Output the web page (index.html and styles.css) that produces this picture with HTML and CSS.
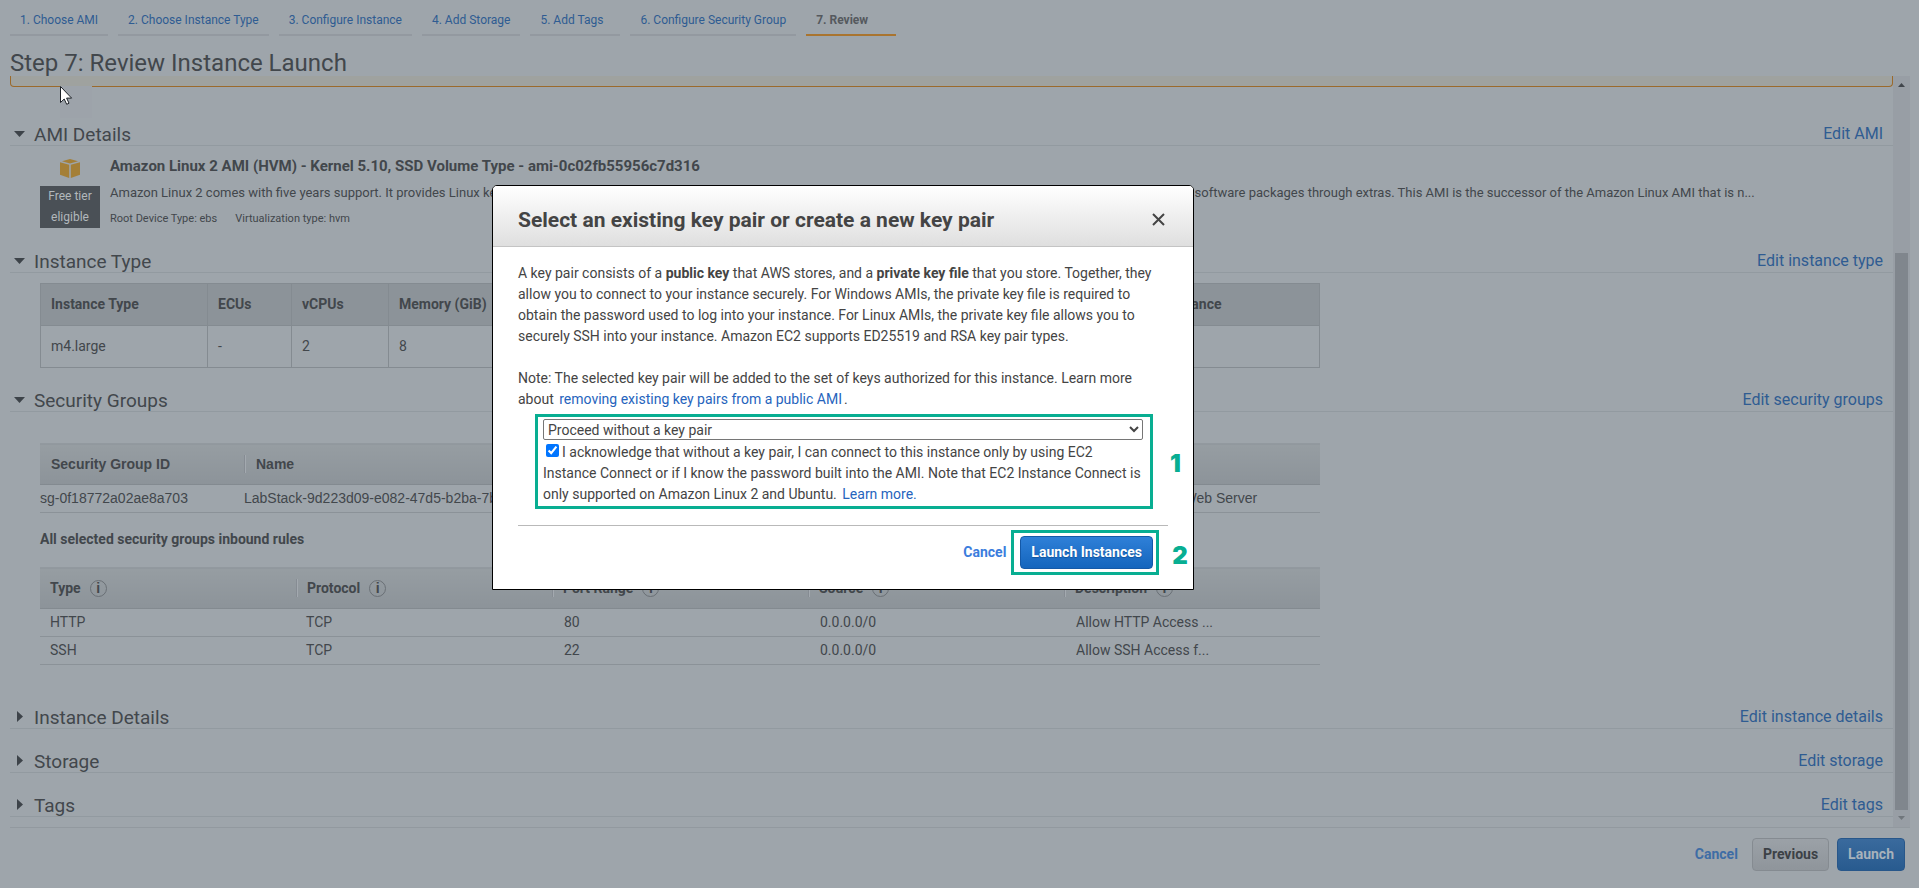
FILE: index.html
```html
<!DOCTYPE html>
<html lang="en">
<head>
<meta charset="utf-8">
<title>Step 7: Review Instance Launch</title>
<link rel="stylesheet" href="styles.css">
</head>
<body>
<div class="page">
  <nav class="steps">
    <a href="#">1. Choose AMI</a>
    <a href="#">2. Choose Instance Type</a>
    <a href="#">3. Configure Instance</a>
    <a href="#">4. Add Storage</a>
    <a href="#">5. Add Tags</a>
    <a href="#">6. Configure Security Group</a>
    <a href="#" class="current">7. Review</a>
  </nav>
  <h1 class="title">Step 7: Review Instance Launch</h1>

  <div class="scroller">
    <main class="content">
      <div class="notice"></div>

      <header class="section-head first">
        <svg class="caret" viewBox="0 0 11 11"><path d="M0 3h11L5.500 9z"/></svg>
        <h2>AMI Details</h2><a href="#">Edit AMI</a>
      </header>
      <section class="ami">
        <div class="badge-col">
          <svg class="cube" viewBox="0 0 20 19"><path d="M10 0l8 2.200-8 2.300-8-2.300z"/><path d="M0 3.200l9.200 2.600V19L0 15.800z"/><path d="M20 3.200l-9.200 2.600V19l9.200-3.200z"/></svg>
          <span class="badge">Free tier eligible</span>
        </div>
        <div class="ami-text">
          <h3>Amazon Linux 2 AMI (HVM) - Kernel 5.10, SSD Volume Type - ami-0c02fb55956c7d316</h3>
          <p class="desc">Amazon Linux 2 comes with five years support. It provides Linux kernel 5.10 tuned for optimal performance on Amazon EC2, systemd 219, GCC 7.3, Glibc 2.26, Binutils 2.29.1, and the latest software packages through extras. This AMI is the successor of the Amazon Linux AMI that is n...</p>
          <p class="meta"><span>Root Device Type: ebs</span><span>Virtualization type: hvm</span></p>
        </div>
      </section>

      <header class="section-head">
        <svg class="caret" viewBox="0 0 11 11"><path d="M0 3h11L5.500 9z"/></svg>
        <h2>Instance Type</h2><a href="#">Edit instance type</a>
      </header>
      <section class="type-block">
        <table class="type-table">
          <colgroup><col class="c-type"><col class="c-ecu"><col class="c-cpu"><col class="c-mem"><col class="c-store"><col class="c-ebs"><col></colgroup>
          <thead><tr><th>Instance Type</th><th>ECUs</th><th>vCPUs</th><th>Memory (GiB)</th><th>Instance Storage (GB)</th><th>EBS-Optimized Available</th><th>Network Performance</th></tr></thead>
          <tbody><tr><td>m4.large</td><td>-</td><td>2</td><td>8</td><td>EBS only</td><td>Yes</td><td>Moderate</td></tr></tbody>
        </table>
      </section>

      <header class="section-head">
        <svg class="caret" viewBox="0 0 11 11"><path d="M0 3h11L5.500 9z"/></svg>
        <h2>Security Groups</h2><a href="#">Edit security groups</a>
      </header>
      <section class="groups">
        <table class="grid group-table">
          <colgroup><col class="c-id"><col class="c-name"><col></colgroup>
          <thead><tr><th><span>Security Group ID</span></th><th><span>Name</span></th><th><span>Description</span></th></tr></thead>
          <tbody><tr><td>sg-0f18772a02ae8a703</td><td>LabStack-9d223d09-e082-47d5-b2ba-7b</td><td>Security Group for Web Server</td></tr></tbody>
        </table>
        <h4>All selected security groups inbound rules</h4>
        <table class="grid rule-table">
          <thead><tr>
            <th><span>Type <i class="info">i</i></span></th>
            <th><span>Protocol <i class="info">i</i></span></th>
            <th><span>Port Range <i class="info">i</i></span></th>
            <th><span>Source <i class="info">i</i></span></th>
            <th><span>Description <i class="info">i</i></span></th>
          </tr></thead>
          <tbody>
            <tr><td>HTTP</td><td>TCP</td><td>80</td><td>0.0.0.0/0</td><td>Allow HTTP Access ...</td></tr>
            <tr><td>SSH</td><td>TCP</td><td>22</td><td>0.0.0.0/0</td><td>Allow SSH Access f...</td></tr>
          </tbody>
        </table>
      </section>

      <header class="section-head">
        <svg class="caret" viewBox="0 0 11 11"><path d="M3 0v11l6-5.500z"/></svg>
        <h2>Instance Details</h2><a href="#">Edit instance details</a>
      </header>
      <header class="section-head">
        <svg class="caret" viewBox="0 0 11 11"><path d="M3 0v11l6-5.500z"/></svg>
        <h2>Storage</h2><a href="#">Edit storage</a>
      </header>
      <header class="section-head">
        <svg class="caret" viewBox="0 0 11 11"><path d="M3 0v11l6-5.500z"/></svg>
        <h2>Tags</h2><a href="#">Edit tags</a>
      </header>
    </main>
    <div class="track">
      <svg class="arrow" viewBox="0 0 17 17"><path d="M5 11h7L8.500 7z"/></svg>
      <div class="thumb"></div>
      <svg class="arrow dim" viewBox="0 0 17 17"><path d="M5 6h7l-3.500 4z"/></svg>
    </div>
  </div>

  <footer class="actions">
    <a href="#" class="cancel">Cancel</a>
    <button type="button" class="btn">Previous</button>
    <button type="button" class="btn primary">Launch</button>
  </footer>
</div>

<svg class="cursor" viewBox="0 0 32 32"><rect class="halo" width="32" height="32"/><path class="pointer" d="M.5.5v16l3.700-3.500 2.500 5.300 2.300-1.100-2.400-5.100h5z"/></svg>

<div class="modal" role="dialog" aria-labelledby="dialog-title">
  <header class="modal-head">
    <h2 id="dialog-title">Select an existing key pair or create a new key pair</h2>
    <button type="button" class="close" aria-label="Close"><svg viewBox="0 0 13 13"><path d="M1 1l11 11M12 1L1 12"/></svg></button>
  </header>
  <div class="modal-body">
    <p>A key pair consists of a <b>public key</b> that AWS stores, and a <b>private key file</b> that you store. Together, they allow you to connect to your instance securely. For Windows AMIs, the private key file is required to obtain the password used to log into your instance. For Linux AMIs, the private key file allows you to securely SSH into your instance. Amazon EC2 supports ED25519 and RSA key pair types.</p>
    <p>Note: The selected key pair will be added to the set of keys authorized for this instance. Learn more about <a href="#" class="inset">removing existing key pairs from a public AMI</a>.</p>
    <div class="mark choice">
      <select aria-label="Key pair option"><option>Proceed without a key pair</option></select>
      <div class="ack"><input type="checkbox" id="ack" checked><label for="ack">I acknowledge that without a key pair, I can connect to this instance only by using EC2 Instance Connect or if I know the password built into the AMI. Note that EC2 Instance Connect is only supported on Amazon Linux 2 and Ubuntu.</label> <a href="#" class="inset">Learn more.</a></div>
      <span class="num">1</span>
    </div>
    <div class="modal-actions">
      <a href="#" class="cancel">Cancel</a>
      <div class="mark launch"><button type="button" class="btn primary">Launch Instances</button><span class="num">2</span></div>
    </div>
  </div>
</div>
</body>
</html>
```
FILE: styles.css
```css
* { box-sizing: border-box; }
body {
  margin: 0;
  background: #9ea5ab;
  color: #42474c;
  font: 14px/21px Roboto, "Liberation Sans", sans-serif;
}
h1, h2, h3, h4, p { margin: 0; font-weight: 400; }
a { color: #2f5c92; text-decoration: none; }
table { border-collapse: collapse; table-layout: fixed; width: 1280px; }
th, td { text-align: left; white-space: nowrap; overflow: hidden; }
.page { min-height: 100vh; padding: 0 9px 0 10px; }

/* wizard steps */
.steps { display: flex; gap: 10px; }
.steps a {
  min-width: 90px;
  height: 36px;
  padding: 10px 10px 0;
  border-bottom: 2px solid #9399a0;
  font-size: 12px;
  line-height: 20px;
}
.steps .current { color: #55595e; font-weight: 700; border-color: #a9742f; }
.title { height: 40px; padding-top: 12px; font-size: 24px; line-height: 30px; }

/* scrolling area */
.scroller { display: flex; border-bottom: 1px solid #92999f; }
.content { flex: 1; min-width: 0; padding-bottom: 10px; }
.notice {
  height: 11px;
  border: 1px solid #9b6a2c;
  border-top: 0;
  border-radius: 0 0 4px 4px;
  background: #9fa29f;
}
.track { width: 17px; display: flex; flex-direction: column; background: #989ea5; }
.arrow { width: 17px; height: 17px; fill: #41464c; }
.arrow.dim { fill: #70767c; }
.thumb { flex: 1; margin: 160px 2px 0; background: #80868d; }

.section-head {
  display: flex;
  align-items: flex-end;
  height: 44px;
  padding: 0 10px 0 4px;
  border-bottom: 1px solid #929aa0;
}
.section-head.first { margin-top: 15px; }
.section-head h2 { flex: 1; font-size: 19px; line-height: 21px; }
.section-head a { font-size: 16px; line-height: 23px; }
.caret { width: 11px; height: 11px; margin: 0 9px 6px 0; fill: #3d4349; }

/* AMI summary */
.ami { display: flex; gap: 10px; padding-left: 30px; height: 83px; }
.badge-col { display: flex; flex-direction: column; align-items: center; width: 60px; padding-top: 13px; }
.cube { width: 20px; height: 19px; fill: #a47f37; }
.badge {
  width: 60px;
  margin-top: 8px;
  padding: 0 6px;
  background: #4a5056;
  color: #b2b8bc;
  font-size: 12px;
  line-height: 21px;
  text-align: center;
}
.ami-text { min-width: 0; padding-top: 10px; white-space: nowrap; }
.ami-text h3 { font-size: 15px; line-height: 21px; font-weight: 700; }
.desc { padding-top: 5px; font-size: 13px; line-height: 21px; }
.meta { display: flex; gap: 18px; padding-top: 5px; font-size: 11px; line-height: 21px; }

/* instance type */
.type-block { padding: 10px 0 0 30px; height: 95px; }
.type-table th, .type-table td { height: 42px; padding: 0 10px; border: 1px solid #848b91; }
.type-table th { background: #8c9399; }
.c-type { width: 167px; }
.c-ecu { width: 84px; }
.c-cpu { width: 97px; }
.c-mem { width: 132px; }
.c-store { width: 280px; }
.c-ebs { width: 272px; }

/* security groups */
.groups { padding: 31px 0 20px 30px; }
.grid th {
  padding: 0;
  border-top: 1px solid #92999f;
  border-bottom: 1px solid #838a90;
  background: linear-gradient(#969da2, #8c9399);
}
.grid th span { display: flex; align-items: center; height: 18px; padding-left: 11px; }
.grid th + th span { border-left: 1px solid #868c93; box-shadow: inset 1px 0 #a3a9af; }
.grid td { height: 28px; padding: 0; border-bottom: 1px solid #8b9298; }
.group-table { font-family: "Liberation Sans", Arial, sans-serif; }
.group-table th { height: 41px; }
.c-id { width: 204px; }
.c-name { width: 822px; }
.groups h4 { padding: 16px 0 17px; font-weight: 700; }
.rule-table th { height: 41px; }
.rule-table th span { padding-left: 10px; }
.rule-table td { padding-left: 10px; }
.rule-table td:nth-child(n+3) { padding-left: 12px; }
.info {
  display: inline-flex;
  align-items: center;
  justify-content: center;
  width: 17px;
  height: 17px;
  margin-left: 9px;
  border: 1px solid #6a7076;
  border-radius: 50%;
  font: 700 14px/15px "Liberation Sans", sans-serif;
}

/* buttons */
.actions { display: flex; align-items: center; justify-content: flex-end; padding: 10px 5px 18px 0; }
.actions .btn + .btn { margin-left: 8px; }
.cancel { margin-right: 14px; color: #3e6da5; font-weight: 700; }
.btn {
  height: 33px;
  padding: 0 10px 2px;
  border: 1px solid #858b91;
  border-radius: 4px;
  background: linear-gradient(#9ba1a7, #8f959b);
  color: #3c4146;
  font: 700 14px/20px Roboto, sans-serif;
}
.btn.primary {
  border-color: #28578a;
  background: linear-gradient(#3a6a9d, #285b8f);
  color: #a8b2bb;
}

.cursor { position: absolute; left: 60px; top: 86px; width: 32px; height: 32px; }
.halo { fill: #9da3aa; }
.pointer { fill: #fff; stroke: #1c2026; stroke-width: 1; }

/* key pair dialog */
.modal {
  position: absolute;
  left: 492px;
  top: 185px;
  width: 702px;
  border: 1px solid #000;
  border-radius: 5px 5px 0 0;
  background: #fff;
  color: #444;
}
.modal a { color: #2664bd; }
.modal-head {
  display: flex;
  align-items: center;
  justify-content: space-between;
  height: 61px;
  padding: 7px 28px 0 25px;
  border-bottom: 1px solid #c4c4c4;
  border-radius: 4px 4px 0 0;
  background: linear-gradient(#fff, #dfdfdf);
}
.modal-head h2 { font-size: 21px; line-height: 26px; font-weight: 700; }
.close { width: 13px; height: 13px; padding: 0; border: 0; background: none; }
.close svg { display: block; width: 13px; height: 13px; fill: none; stroke: #444; stroke-width: 2; }
.modal-body { padding: 16px 25px 14px; }
.modal-body p + p { margin-top: 21px; }
.inset { padding: 0 2px; }
.mark { position: relative; border: 3px solid #08ae92; }
.choice { margin: 4px 15px 16px 17px; padding: 2px 7px 1px 5px; }
.choice select {
  display: block;
  width: 100%;
  height: 21px;
  border: 1px solid #767676;
  border-radius: 2px;
  background: #fff;
  color: #444;
  font: 14px/19px Roboto, sans-serif;
}
.ack { padding-top: 1px; }
.ack input { width: 13px; height: 13px; margin: 3px 3px 3px 3px; accent-color: #0075ff; }
.num {
  position: absolute;
  color: #08ae92;
  font: 900 24px/26px Inter, sans-serif;
}
.choice .num { left: 632px; top: 34px; }
.launch .num { left: 158px; top: 10px; }
.modal-actions {
  display: flex;
  align-items: center;
  justify-content: flex-end;
  padding: 4px 9px 0 0;
  border-top: 1px solid #b9b9b9;
}
.modal .cancel { margin-right: 5px; color: #3b7ddd; }
.launch { padding: 3px 3px 3px 6px; }
.launch .btn { display: block; border-color: #1459a8; background: linear-gradient(#2f80d8, #1465bd); color: #fff; text-shadow: 0 1px 1px #10549c; }
```
